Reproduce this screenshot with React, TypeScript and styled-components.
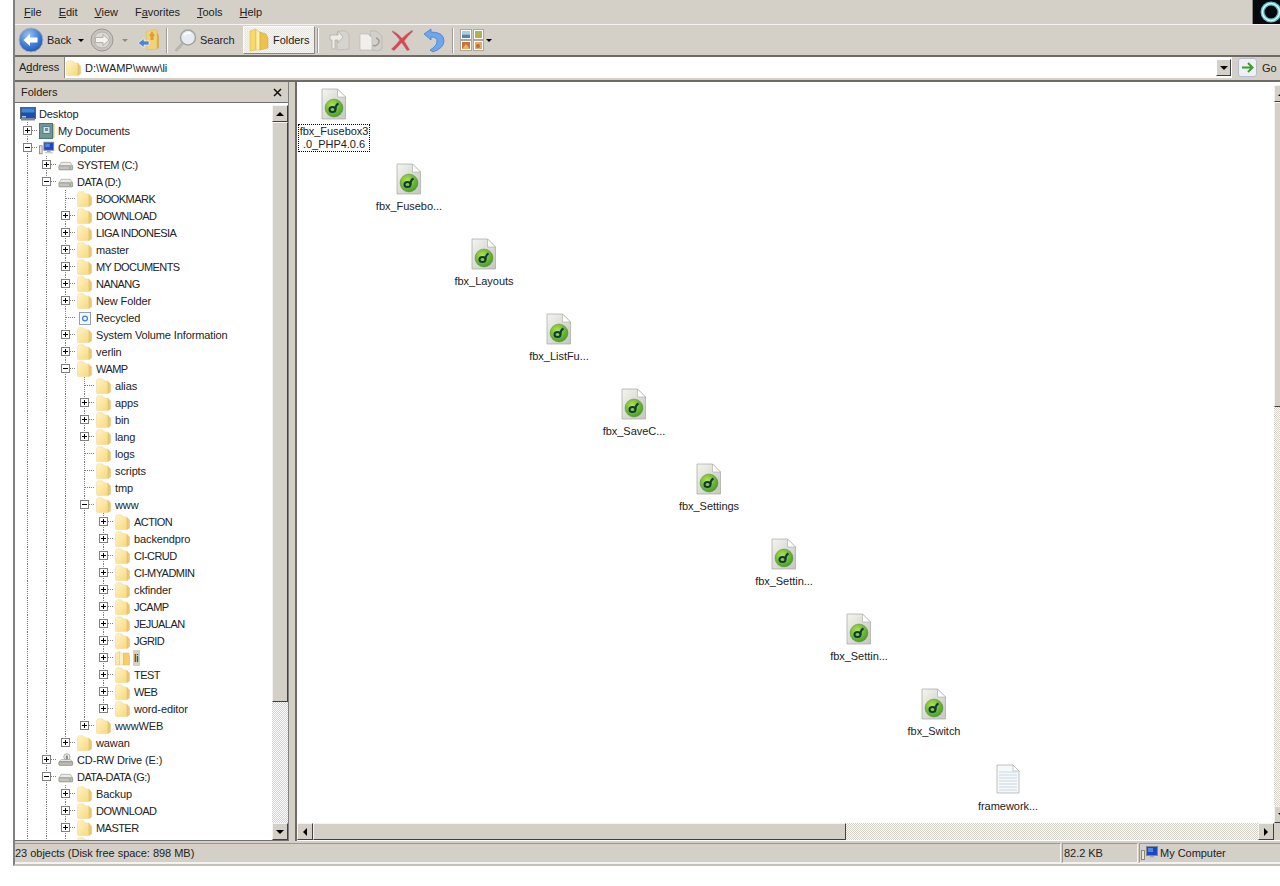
import React from "react";
import styled, { createGlobalStyle } from "styled-components";

const Global = createGlobalStyle`
  html, body { margin: 0; padding: 0; background: #fff; }
  body { font-family: "Liberation Sans", Arial, sans-serif; font-size: 11px; letter-spacing: -0.03px; color: #222; }
  #root { width: 1280px; height: 886px; overflow: hidden; }
`;

const CHROME = "#d4d0c8";
const CHECKER = `repeating-conic-gradient(#d4d0c8 0 25%, #ffffff 0 50%) 0 0 / 2px 2px`;

const Page = styled.div`
  width: 1280px;
  height: 886px;
  overflow: hidden;
  background: #fff;
  padding-left: 13px;
  box-sizing: border-box;
`;
const Win = styled.div`
  width: 1278px;
  height: 866px;
  display: flex;
  flex-direction: column;
  background: ${CHROME};
  border-left: 2px solid #808080;
  border-bottom: 2px solid #c4c1ba;
  box-sizing: border-box;
`;
const MenuBar = styled.div`
  height: 25px;
  flex: none;
  display: flex;
  align-items: center;
  padding-left: 9px;
  gap: 17px;
  box-sizing: border-box;
  border-bottom: 1px solid #f4f3ef;
`;
const MenuItem = styled.span`
  line-height: 24px;
`;
const Brand = styled.div`
  margin-left: auto;
  width: 39px;
  height: 24px;
  background: #05090c;
  border-left: 1px solid #8a8880;
  display: flex;
  align-items: center;
  justify-content: center;
  flex: none;
  padding-right: 2px;
  box-sizing: border-box;
`;
const Toolbar = styled.div`
  height: 32px;
  flex: none;
  display: flex;
  align-items: center;
  padding-left: 3px;
  box-sizing: border-box;
  border-bottom: 2px solid #6e6c67;
`;
const ToolBtn = styled.div<{ $w: number; $gap?: number }>`
  width: ${(p) => p.$w}px;
  height: 28px;
  flex: none;
  display: flex;
  align-items: center;
  gap: ${(p) => p.$gap ?? 3}px;
  box-sizing: border-box;
`;
const ActiveBtn = styled(ToolBtn)`
  background: repeating-conic-gradient(#e8e6e1 0 25%, #f6f5f2 0 50%) 0 0 / 2px 2px;
  border-top: 1px solid #fff;
  border-left: 1px solid #fff;
  border-right: 1px solid #8c8a85;
  border-bottom: 1px solid #8c8a85;
  padding-left: 4px;
`;
const Sep = styled.div<{ $l: number; $r: number }>`
  width: 2px;
  height: 25px;
  margin: 0 ${(p) => p.$r}px 0 ${(p) => p.$l}px;
  background: linear-gradient(to right, #9c9a94 0 1px, #fff 1px 2px);
  flex: none;
`;
const Caret = styled.i<{ $grey?: boolean }>`
  width: 0;
  height: 0;
  border: 3px solid transparent;
  border-top: 3px solid ${(p) => (p.$grey ? "#8c8a85" : "#000")};
  border-bottom: 0;
  flex: none;
`;
const AddressBar = styled.div`
  height: 25px;
  flex: none;
  display: flex;
  align-items: flex-start;
  box-sizing: border-box;
  border-bottom: 2px solid #6e6c67;
  padding-right: 16px;
`;
const AddressLabel = styled.span`
  width: 49px;
  flex: none;
  height: 21px;
  line-height: 21px;
  padding-left: 4px;
  box-sizing: border-box;
`;
const AddressField = styled.div`
  flex: 1;
  height: 21px;
  background: #fff;
  display: flex;
  align-items: center;
  padding-left: 1px;
  gap: 3px;
  box-sizing: border-box;
  border-left: 1px solid #8c8a85;
`;
const Combo = styled.div`
  margin-left: auto;
  width: 15px;
  height: 17px;
  margin-right: 1px;
  background: ${CHROME};
  border-top: 1px solid #fff;
  border-left: 1px solid #fff;
  border-right: 1px solid #404040;
  border-bottom: 1px solid #404040;
  box-sizing: border-box;
  display: flex;
  align-items: center;
  justify-content: center;
`;
const GoWrap = styled.div`
  flex: none;
  width: 37px;
  height: 21px;
  margin-left: 6px;
  display: flex;
  align-items: center;
  gap: 5px;
`;
const GoBtn = styled.div`
  width: 19px;
  height: 19px;
  flex: none;
  border-radius: 3px;
  background: #eef0f6;
  border: 1px solid #b9bcc8;
  box-sizing: border-box;
  display: flex;
  align-items: center;
  justify-content: center;
`;
const Main = styled.div`
  flex: 1;
  min-height: 0;
  display: flex;
`;
const Side = styled.div`
  width: 273px;
  flex: none;
  display: flex;
  flex-direction: column;
  border-bottom: 1px solid #707070;
  border-right: 1px solid #808080;
  box-sizing: content-box;
`;
const SideHead = styled.div`
  height: 21px;
  flex: none;
  display: flex;
  align-items: center;
  justify-content: space-between;
  padding: 0 6px 0 6px;
  box-sizing: border-box;
  border-bottom: 1px solid #707070;
`;
const SideBody = styled.div`
  flex: 1;
  min-height: 0;
  display: flex;
  background: #fff;
`;
const Tree = styled.div`
  flex: 1;
  min-width: 0;
  overflow: hidden;
  padding: 2px 0 0 3px;
`;
const Row = styled.div`
  height: 17px;
  display: flex;
  align-items: center;
  white-space: nowrap;
`;
const Guide = styled.span<{ $on: boolean }>`
  width: 19px;
  height: 17px;
  flex: none;
  background: ${(p) =>
    p.$on
      ? "repeating-linear-gradient(to bottom, #808080 0 1px, transparent 1px 2px) 9px 0 / 1px 100% no-repeat"
      : "none"};
`;
const Branch = styled.span<{ $more: boolean }>`
  width: 19px;
  height: 17px;
  flex: none;
  position: relative;
  background:
    repeating-linear-gradient(to right, #808080 0 1px, transparent 1px 2px) 10px 8px / 9px 1px no-repeat,
    repeating-linear-gradient(to bottom, #808080 0 1px, transparent 1px 2px) 9px 0 / 1px ${(p) => (p.$more ? "100%" : "9px")} no-repeat;
`;
const Expander = styled.span`
  position: absolute;
  left: 5px;
  top: 4px;
  width: 9px;
  height: 9px;
  background: #fff;
  border: 1px solid #808080;
  box-sizing: border-box;
  &::before {
    content: "";
    position: absolute;
    left: 1px;
    top: 3px;
    width: 5px;
    height: 1px;
    background: #000;
  }
`;
const Plus = styled(Expander)`
  &::after {
    content: "";
    position: absolute;
    left: 3px;
    top: 1px;
    width: 1px;
    height: 5px;
    background: #000;
  }
`;
const NodeIcon = styled.span`
  width: 16px;
  height: 16px;
  flex: none;
  margin-left: 2px;
  display: flex;
`;
const NodeText = styled.span<{ $sel?: boolean; $caps?: boolean }>`
  margin-left: 2px;
  padding: 0 1px;
  height: 16px;
  line-height: 16px;
  letter-spacing: ${(p) => (p.$caps ? "-0.55px" : "-0.12px")};
  background: ${(p) => (p.$sel ? CHROME : "transparent")};
`;
const VBar = styled.div`
  width: 16px;
  flex: none;
  display: flex;
  flex-direction: column;
  padding-top: 2px;
`;
const BarBtn = styled.div`
  width: 16px;
  height: 17px;
  flex: none;
  background: ${CHROME};
  border-top: 1px solid #f4f3ef;
  border-left: 1px solid #f4f3ef;
  border-right: 1px solid #404040;
  border-bottom: 1px solid #404040;
  box-sizing: border-box;
  display: flex;
  align-items: center;
  justify-content: center;
`;
const Thumb = styled(BarBtn)<{ $h?: number; $w?: number }>`
  height: ${(p) => (p.$h ? `${p.$h}px` : "100%")};
  width: ${(p) => (p.$w ? `${p.$w}px` : "16px")};
`;
const Track = styled.div`
  flex: 1;
  min-width: 0;
  min-height: 0;
  background: ${CHECKER};
`;
const Arrow = styled.i<{ $d: "up" | "down" | "left" | "right" }>`
  width: 0;
  height: 0;
  flex: none;
  border-style: solid;
  border-color: transparent;
  ${(p) =>
    p.$d === "up"
      ? "border-width: 0 4px 4px; border-bottom-color:#000;"
      : p.$d === "down"
      ? "border-width: 4px 4px 0; border-top-color:#000;"
      : p.$d === "left"
      ? "border-width: 4px 4px 4px 0; border-right-color:#000;"
      : "border-width: 4px 0 4px 4px; border-left-color:#000;"}
`;
const Splitter = styled.div`
  width: 6px;
  flex: none;
`;
const Right = styled.div`
  flex: 1;
  min-width: 0;
  display: grid;
  grid-template-columns: 1fr 17px;
  grid-template-rows: 1fr 17px;
  border-left: 2px solid #6e6c67;
  padding-bottom: 1px;
  background: #fff;
`;
const Canvas = styled.div`
  position: relative;
  overflow: hidden;
  background: #fff;
`;
const FileItem = styled.div<{ $x: number; $y: number }>`
  position: absolute;
  left: ${(p) => p.$x}px;
  top: ${(p) => p.$y}px;
  width: 74px;
  display: flex;
  flex-direction: column;
  align-items: center;
`;
const FileLabel = styled.div<{ $focus?: boolean }>`
  margin-top: 4px;
  width: 72px;
  box-sizing: border-box;
  text-align: center;
  line-height: 13px;
  border: 1px ${(p) => (p.$focus ? "dotted #000" : "solid transparent")};
  white-space: nowrap;
`;
const RightV = styled.div`
  grid-row: 1;
  grid-column: 2;
  display: flex;
  flex-direction: column;
  padding-top: 3px;
  background: #fff;
`;
const HBar = styled.div`
  grid-row: 2;
  grid-column: 1;
  display: flex;
  height: 17px;
`;
const Corner = styled.div`
  grid-row: 2;
  grid-column: 2;
  background: ${CHROME};
`;
const Status = styled.div`
  height: 20px;
  flex: none;
  display: flex;
  gap: 1px;
  align-items: stretch;
  margin-top: 2px;
  border-bottom: 1px solid #f4f3ef;
`;
const StatusCell = styled.div<{ $w?: number; $flush?: boolean }>`
  ${(p) => (p.$w ? `width:${p.$w}px; flex:none;` : "flex:1;")}
  display: flex;
  align-items: center;
  gap: 1px;
  padding-left: ${(p) => (p.$flush ? 0 : 1)}px;
  box-sizing: border-box;
  border-left: ${(p) => (p.$flush ? "0" : "1px solid #9a9891")};
  border-top: 1px solid #9a9891;
  border-right: 1px solid #f4f3ef;
  border-bottom: 1px solid #f4f3ef;
`;

/* ---------- icons ---------- */
const Folder = ({ s = 16 }: { s?: number }) => (
  <svg width={s} height={s} viewBox="0 0 16 16">
    <defs>
      <linearGradient id="fld" x1="0" y1="0" x2="1" y2="1">
        <stop offset="0" stopColor="#fff4c8" />
        <stop offset="1" stopColor="#f8d879" />
      </linearGradient>
    </defs>
    <path d="M0.5 3 Q0.5 0.8 2.5 0.8 L6 0.8 L9 3 L12 3 L12 15.5 L1.5 15.5 Q0.5 15.5 0.5 14.5Z" fill="url(#fld)" stroke="#eed595" strokeWidth=".5" />
    <path d="M12 3.5 L14.5 6 L14.5 14 L12 15.5Z" fill="#e9c777" stroke="#dcb868" strokeWidth=".4" />
  </svg>
);
const OpenFolder = () => (
  <svg width="16" height="16" viewBox="0 0 16 16">
    <path d="M0.5 3 L4.5 1.5 L4.5 15 L0.5 15Z" fill="#fae9a8" stroke="#e2c47a" strokeWidth=".5" />
    <path d="M4.5 2 L8.5 4 L8.5 15 L4.5 15Z" fill="#fdf2c6" stroke="#e2c47a" strokeWidth=".5" />
    <path d="M8.5 3 L13.5 3 L14.5 6 L14.5 15 L8.5 15Z" fill="#f4cf6c" stroke="#d6ae58" strokeWidth=".5" />
  </svg>
);
const DesktopIcon = () => (
  <svg width="16" height="16" viewBox="0 0 16 16">
    <rect x="0.5" y="1.5" width="15" height="11" fill="#1e4fa8" stroke="#58627a" />
    <rect x="1.5" y="2.5" width="13" height="4" fill="#3d86d8" />
    <rect x="1" y="12" width="14" height="2.5" fill="#7d8799" />
    <rect x="2" y="10" width="4" height="1.5" fill="#a9c6ec" />
  </svg>
);
const DocsIcon = () => (
  <svg width="16" height="16" viewBox="0 0 16 16">
    <rect x="0.5" y="0.5" width="13" height="15" fill="#6d9a94" stroke="#50756f" />
    <rect x="4" y="3.5" width="7" height="7" fill="#d5e3e0" stroke="#5a7c9a" />
    <rect x="6" y="5" width="3" height="3" fill="#6c8fa8" />
    <rect x="14" y="1" width="1.5" height="14" fill="#eac35f" />
  </svg>
);
const ComputerIcon = () => (
  <svg width="18" height="16" viewBox="0 0 18 16">
    <rect x="0.5" y="5.5" width="3" height="9" fill="#e8e6d8" stroke="#8b8a78" />
    <rect x="5.5" y="1.5" width="11" height="9" fill="#1a47c4" stroke="#7f8795" />
    <rect x="7" y="3" width="5" height="4" fill="#4f86ea" />
    <rect x="9" y="11" width="4" height="1.5" fill="#a5a8ae" />
    <rect x="6.5" y="12.5" width="9" height="1.5" fill="#c8cacf" />
  </svg>
);
const DriveIcon = () => (
  <svg width="18" height="16" viewBox="0 0 18 16">
    <path d="M3.5 5 L14 5 L16.5 9 L1 9Z" fill="#eceae4" stroke="#8f8d86" strokeWidth=".6" />
    <rect x="1" y="9" width="15.5" height="4.5" rx="1" fill="#c4c3bd" stroke="#7e7c76" strokeWidth=".7" />
    <rect x="12.5" y="10.5" width="2" height="1.5" fill="#6cb36c" />
  </svg>
);
const CdIcon = () => (
  <svg width="18" height="16" viewBox="0 0 18 16">
    <circle cx="10" cy="4.5" r="3.5" fill="#eef0f2" stroke="#7e7c76" strokeWidth=".7" />
    <rect x="8.8" y="3" width="2.4" height="5" fill="#8a8a8a" />
    <path d="M3.5 7.5 L14 7.5 L16.5 10 L1 10Z" fill="#eceae4" stroke="#8f8d86" strokeWidth=".6" />
    <rect x="1" y="10" width="15.5" height="4" rx="1" fill="#bdbcb6" stroke="#6e6c66" strokeWidth=".7" />
  </svg>
);
const BinIcon = () => (
  <svg width="16" height="16" viewBox="0 0 16 16">
    <rect x="2.5" y="2.5" width="11" height="12" fill="#f6f8fc" stroke="#8aa0c4" />
    <circle cx="8" cy="8.5" r="2.4" fill="none" stroke="#3f86cf" strokeWidth="1.3" />
  </svg>
);
const DwFile = () => (
  <svg width="32" height="32" viewBox="0 0 32 32">
    <defs>
      <linearGradient id="pg" x1="0" y1="0" x2="1" y2="1">
        <stop offset="0" stopColor="#f4f4f0" />
        <stop offset="1" stopColor="#c6c6c0" />
      </linearGradient>
      <radialGradient id="dw" cx=".4" cy=".35" r=".7">
        <stop offset="0" stopColor="#b3e34e" />
        <stop offset="1" stopColor="#3f9a26" />
      </radialGradient>
    </defs>
    <path d="M4 1 L19.5 1 L27.5 9 L27.5 31 L4 31Z" fill="url(#pg)" stroke="#a8a8a2" strokeWidth=".7" />
    <path d="M19.5 1 L19.5 9 L27.5 9Z" fill="#fff" stroke="#a8a8a2" strokeWidth=".6" />
    <circle cx="16" cy="20" r="9" fill="url(#dw)" stroke="#5d8f3a" strokeWidth=".5" />
    <ellipse cx="14.5" cy="21.5" rx="3" ry="2.6" fill="none" stroke="#0d3a3a" strokeWidth="2" />
    <path d="M17.5 21.5 Q17.5 17 20.5 15.5" fill="none" stroke="#0d3a3a" strokeWidth="2" />
  </svg>
);
const TxtFile = () => (
  <svg width="32" height="32" viewBox="0 0 32 32">
    <path d="M5 2 L21 2 L27 8 L27 30 L5 30Z" fill="#f7f8fa" stroke="#a8a8a8" strokeWidth=".7" />
    <path d="M21 2 L21 8 L27 8Z" fill="#fff" stroke="#a8a8a8" strokeWidth=".6" />
    {[9, 12, 15, 18, 21, 24, 27].map((y) => (
      <path key={y} d={`M7 ${y} H25`} stroke="#c8d6e4" strokeWidth="1" />
    ))}
  </svg>
);
const BackIcon = () => (
  <svg width="26" height="26" viewBox="0 0 26 26">
    <defs>
      <radialGradient id="bk" cx=".4" cy=".3" r=".8">
        <stop offset="0" stopColor="#9dc4f2" />
        <stop offset=".6" stopColor="#3a78cf" />
        <stop offset="1" stopColor="#1e4da6" />
      </radialGradient>
    </defs>
    <circle cx="13" cy="13" r="12" fill="url(#bk)" stroke="#a8b2c4" />
    <path d="M5.5 13 L12 7 L12 10.5 L19.5 10.5 L19.5 15.5 L12 15.5 L12 19Z" fill="#fff" />
  </svg>
);
const ForwardIcon = () => (
  <svg width="24" height="24" viewBox="0 0 24 24">
    <circle cx="12" cy="12" r="11" fill="#c6c4bd" stroke="#9a9891" />
    <circle cx="12" cy="12" r="8" fill="#dbd9d3" stroke="#b5b3ac" />
    <path d="M19 12 L13 6.5 L13 9.5 L5.5 9.5 L5.5 14.5 L13 14.5 L13 17.5Z" fill="#f4f3ef" stroke="#9a9891" strokeWidth=".7" />
  </svg>
);
const UpIcon = () => (
  <svg width="24" height="24" viewBox="0 0 24 24">
    <path d="M9 4 L14 2 L20 2 L20 21 L10 22Z" fill="#f0d27a" stroke="#d6b665" strokeWidth=".5" />
    <path d="M20 4 L22 8 L22 20 L20 21Z" fill="#d6ae55" />
    <path d="M1 15 L7 10.5 L7 13 L12 13 L12 17 L7 17 L7 19.5Z" fill="#4b86cf" stroke="#fff" strokeWidth=".6" />
    <path d="M15 3 L18 8 L16.5 8 L16.5 12 L13.5 12 L13.5 8 L12 8Z" fill="#e39a2f" />
  </svg>
);
const SearchIcon = () => (
  <svg width="24" height="24" viewBox="0 0 24 24">
    <path d="M8 16 L2.5 22" stroke="#b8b6ae" strokeWidth="3" strokeLinecap="round" />
    <circle cx="14" cy="9.5" r="7.5" fill="#e6ecf2" stroke="#a3a5a5" strokeWidth="1.6" />
    <path d="M10 7 Q13 4 17 5.5" stroke="#fff" strokeWidth="1.6" fill="none" />
  </svg>
);
const FoldersIcon = () => (
  <svg width="22" height="24" viewBox="0 0 22 24">
    <path d="M2 3 L8 1 L8 22 L2 23Z" fill="#f6d86e" stroke="#d9b348" strokeWidth=".5" />
    <path d="M8 2 L12 4 L12 22 L8 22Z" fill="#fdf0a8" stroke="#d9b348" strokeWidth=".5" />
    <path d="M12 4 L18 6 L20 10 L20 20 L12 22Z" fill="#edc24c" stroke="#cfa24a" strokeWidth=".5" />
  </svg>
);
const MoveIcon = () => (
  <svg width="24" height="24" viewBox="0 0 24 24">
    <path d="M10 5 L14 3 L19 3 L22 7 L22 21 L10 22Z" fill="#d6d4ce" stroke="#b2b0a9" strokeWidth=".6" />
    <path d="M3 7 L11 7 L11 3 L16 9 L11 15 L11 12 L8 12 L8 21 L5 21 L5 12 L3 12Z" fill="#ecebe6" stroke="#a3a19a" strokeWidth=".6" />
  </svg>
);
const CopyIcon = () => (
  <svg width="26" height="24" viewBox="0 0 26 24">
    <path d="M12 3 L18 3 L24 8 L24 21 Q20 24 14 22Z" fill="#d2d0ca" stroke="#aeaca5" strokeWidth=".6" />
    <path d="M2 6 L10 6 L14 10 L14 22 L2 22Z" fill="#f0efeb" stroke="#b7b5ae" strokeWidth=".6" />
    <path d="M18 10 Q23 12 20 16 Q17 19 15 17" fill="none" stroke="#a09e97" strokeWidth="1.6" />
  </svg>
);
const DeleteIcon = () => (
  <svg width="24" height="24" viewBox="0 0 24 24">
    <path d="M2 2.5 Q7 4 12 10 Q16 6 22 2 L23 3.5 Q18 8 14.5 13 Q17 17 20 22 L17 23 Q14 18 11.5 15 Q8 19 4 23 L1 21 Q6 17 9.5 12 Q6 7 2 4Z" fill="#d9484f" stroke="#b8c0c8" strokeWidth=".5" />
  </svg>
);
const UndoIcon = () => (
  <svg width="24" height="26" viewBox="0 0 24 26">
    <path d="M2 7 L9 2 L9 5 Q22 5 22 14 Q22 21 11 25 L8 23 Q15 19 15 14 Q15 10 9 10 L9 13Z" fill="#6da6ea" stroke="#3c78c8" strokeWidth=".7" />
  </svg>
);
const ViewsIcon = () => (
  <svg width="24" height="22" viewBox="0 0 24 22">
    <rect x="0.5" y="0.5" width="11" height="10" fill="#fff" stroke="#a9a7a0" />
    <rect x="2" y="2" width="8" height="3.5" fill="#a9cde4" />
    <rect x="2" y="5.5" width="8" height="3.5" fill="#4f87a8" />
    <rect x="13.5" y="0.5" width="10" height="10" fill="#fff" stroke="#a9a7a0" />
    <rect x="15" y="2" width="7" height="7" fill="#9cba5e" />
    <path d="M15 9 L19 4 L22 9Z" fill="#d9a04a" />
    <rect x="0.5" y="11.5" width="11" height="10" fill="#fff" stroke="#a9a7a0" />
    <rect x="2" y="13" width="8" height="7" fill="#c9703e" />
    <path d="M2 20 L6 15 L10 20Z" fill="#e8b45a" />
    <rect x="13.5" y="11.5" width="10" height="10" fill="#fff" stroke="#a9a7a0" />
    <rect x="15" y="13" width="7" height="7" fill="#dcae68" />
    <circle cx="18" cy="17" r="2" fill="#c8682e" />
  </svg>
);
const GoArrow = () => (
  <svg width="13" height="13" viewBox="0 0 13 13">
    <path d="M1 6.5 H11 M7 2 L11.5 6.5 L7 11" fill="none" stroke="#3f9a2f" strokeWidth="2" />
  </svg>
);
const Ring = () => (
  <svg width="26" height="24" viewBox="0 0 26 24">
    <circle cx="13" cy="12" r="8.5" fill="none" stroke="#5fc0c8" strokeWidth="4" />
    <circle cx="13" cy="12" r="8.5" fill="none" stroke="#dff" strokeWidth="1.4" />
  </svg>
);
const CloseX = () => (
  <svg width="9" height="9" viewBox="0 0 9 9">
    <path d="M1 1 L8 8 M8 1 L1 8" stroke="#111" strokeWidth="1.5" />
  </svg>
);

/* ---------- data ---------- */
type Kind = "folder" | "open" | "desktop" | "docs" | "computer" | "drive" | "cd" | "bin";
type Node = { t: string; k?: Kind; exp?: boolean; kids?: Node[]; more?: boolean; sel?: boolean };
const f = (t: string, exp = true): Node => ({ t, exp });

const tree: Node[] = [
  { t: "My Documents", k: "docs", exp: true },
  {
    t: "Computer",
    k: "computer",
    exp: true,
    more: true,
    kids: [
      { t: "SYSTEM (C:)", k: "drive", exp: true },
      {
        t: "DATA (D:)",
        k: "drive",
        exp: true,
        kids: [
          f("BOOKMARK", false),
          f("DOWNLOAD"),
          f("LIGA INDONESIA"),
          f("master"),
          f("MY DOCUMENTS"),
          f("NANANG"),
          f("New Folder"),
          { t: "Recycled", k: "bin" },
          f("System Volume Information"),
          f("verlin"),
          {
            t: "WAMP",
            exp: true,
            kids: [
              f("alias", false),
              f("apps"),
              f("bin"),
              f("lang"),
              f("logs", false),
              f("scripts", false),
              f("tmp", false),
              {
                t: "www",
                exp: true,
                kids: [
                  f("ACTION"),
                  f("backendpro"),
                  f("CI-CRUD"),
                  f("CI-MYADMIN"),
                  f("ckfinder"),
                  f("JCAMP"),
                  f("JEJUALAN"),
                  f("JGRID"),
                  { t: "li", k: "open", exp: true, sel: true },
                  f("TEST"),
                  f("WEB"),
                  f("word-editor"),
                ],
              },
              f("wwwWEB"),
            ],
          },
          f("wawan"),
        ],
      },
      { t: "CD-RW Drive (E:)", k: "cd", exp: true },
      {
        t: "DATA-DATA (G:)",
        k: "drive",
        exp: true,
        more: true,
        kids: [f("Backup"), f("DOWNLOAD"), f("MASTER"), { t: "", exp: true, more: true }],
      },
    ],
  },
];

const iconFor = (k?: Kind) => {
  switch (k) {
    case "open": return <OpenFolder />;
    case "docs": return <DocsIcon />;
    case "computer": return <ComputerIcon />;
    case "drive": return <DriveIcon />;
    case "cd": return <CdIcon />;
    case "bin": return <BinIcon />;
    default: return <Folder />;
  }
};

const renderNodes = (nodes: Node[], guides: boolean[]): React.ReactNode[] =>
  nodes.flatMap((n, i) => {
    const more = i < nodes.length - 1 || !!n.more;
    const row = (
      <Row key={guides.length + n.t + i}>
        {guides.map((g, j) => <Guide key={j} $on={g} />)}
        <Branch $more={more}>
          {n.exp ? (n.kids ? <Expander /> : <Plus />) : null}
        </Branch>
        <NodeIcon>{iconFor(n.k)}</NodeIcon>
        <NodeText $sel={n.sel} $caps={n.t === n.t.toUpperCase()}>{n.t}</NodeText>
      </Row>
    );
    return [row, ...(n.kids ? renderNodes(n.kids, [...guides, more]) : [])];
  });

const files: { lines: string[]; focus?: boolean; txt?: boolean }[] = [
  { lines: ["fbx_Fusebox3", ".0_PHP4.0.6"], focus: true },
  { lines: ["fbx_Fusebo..."] },
  { lines: ["fbx_Layouts"] },
  { lines: ["fbx_ListFu..."] },
  { lines: ["fbx_SaveC..."] },
  { lines: ["fbx_Settings"] },
  { lines: ["fbx_Settin..."] },
  { lines: ["fbx_Settin..."] },
  { lines: ["fbx_Switch"] },
  { lines: ["framework..."], txt: true },
];

export default function App() {
  return (
    <Page>
      <Global />
      <Win>
        <MenuBar>
          <MenuItem><u>F</u>ile</MenuItem>
          <MenuItem><u>E</u>dit</MenuItem>
          <MenuItem><u>V</u>iew</MenuItem>
          <MenuItem>F<u>a</u>vorites</MenuItem>
          <MenuItem><u>T</u>ools</MenuItem>
          <MenuItem><u>H</u>elp</MenuItem>
          <Brand><Ring /></Brand>
        </MenuBar>
        <Toolbar>
          <ToolBtn $w={60}><BackIcon />Back</ToolBtn>
          <ToolBtn $w={12}><Caret /></ToolBtn>
          <ToolBtn $w={32}><ForwardIcon /></ToolBtn>
          <ToolBtn $w={15}><Caret $grey /></ToolBtn>
          <ToolBtn $w={29}><UpIcon /></ToolBtn>
          <Sep $l={0} $r={6} />
          <ToolBtn $w={69} $gap={2}><SearchIcon />Search</ToolBtn>
          <ActiveBtn $w={72}><FoldersIcon />Folders</ActiveBtn>
          <Sep $l={2} $r={8} />
          <ToolBtn $w={31}><MoveIcon /></ToolBtn>
          <ToolBtn $w={32}><CopyIcon /></ToolBtn>
          <ToolBtn $w={32}><DeleteIcon /></ToolBtn>
          <ToolBtn $w={30}><UndoIcon /></ToolBtn>
          <Sep $l={0} $r={6} />
          <ToolBtn $w={32} $gap={2}><ViewsIcon /><Caret /></ToolBtn>
        </Toolbar>
        <AddressBar>
          <AddressLabel>A<u>d</u>dress</AddressLabel>
          <AddressField>
            <Folder />
            D:\WAMP\www\li
            <Combo><Arrow $d="down" /></Combo>
          </AddressField>
          <GoWrap>
            <GoBtn><GoArrow /></GoBtn>
            Go
          </GoWrap>
        </AddressBar>
        <Main>
          <Side>
            <SideHead>
              Folders
              <CloseX />
            </SideHead>
            <SideBody>
              <Tree>
                <Row>
                  <NodeIcon><DesktopIcon /></NodeIcon>
                  <NodeText>Desktop</NodeText>
                </Row>
                {renderNodes(tree, [])}
              </Tree>
              <VBar>
                <BarBtn><Arrow $d="up" /></BarBtn>
                <Thumb $h={580} />
                <Track />
                <BarBtn><Arrow $d="down" /></BarBtn>
              </VBar>
            </SideBody>
          </Side>
          <Splitter />
          <Right>
            <Canvas>
              {files.map((it, i) => (
                <FileItem key={i} $x={i * 75 - (i === 9 ? 1 : 0)} $y={6 + i * 75}>
                  {it.txt ? <TxtFile /> : <DwFile />}
                  <FileLabel $focus={it.focus}>
                    {it.lines.map((l, j) => <div key={j}>{l}</div>)}
                  </FileLabel>
                </FileItem>
              ))}
            </Canvas>
            <RightV>
              <BarBtn><Arrow $d="up" /></BarBtn>
              <Thumb $h={305} />
              <Track />
              <BarBtn><Arrow $d="down" /></BarBtn>
            </RightV>
            <HBar>
              <BarBtn><Arrow $d="left" /></BarBtn>
              <Thumb $w={533} />
              <Track />
              <BarBtn><Arrow $d="right" /></BarBtn>
            </HBar>
            <Corner />
          </Right>
        </Main>
        <Status>
          <StatusCell $flush>23 objects (Disk free space: 898 MB)</StatusCell>
          <StatusCell $w={76}>82.2 KB</StatusCell>
          <StatusCell $w={152}><ComputerIcon />My Computer</StatusCell>
        </Status>
      </Win>
    </Page>
  );
}
